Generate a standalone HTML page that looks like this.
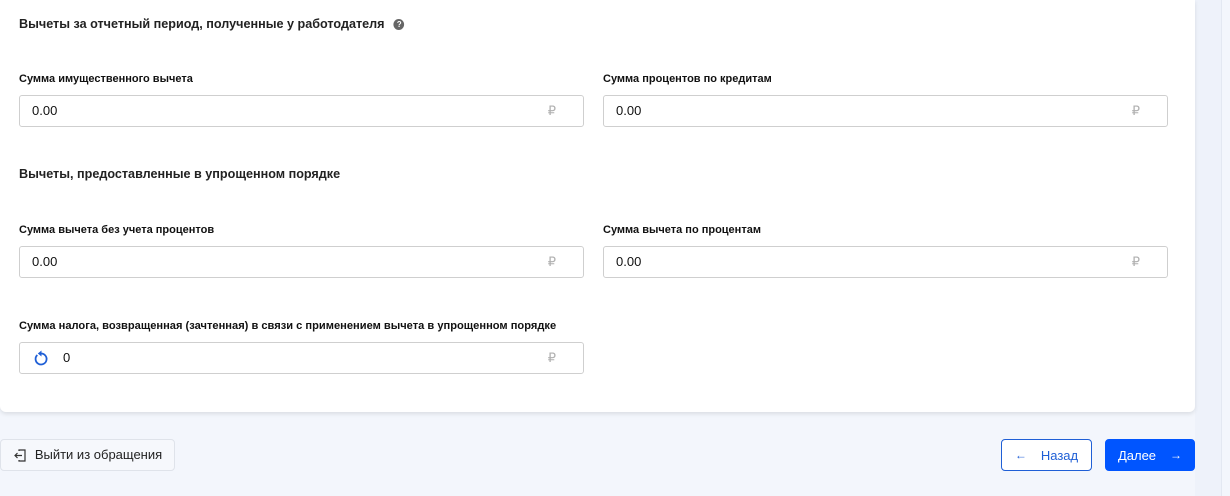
<!DOCTYPE html>
<html><head><meta charset="utf-8"><style>
*{box-sizing:border-box;margin:0;padding:0}
body{width:1230px;height:496px;background:#f3f6fc;font-family:"Liberation Sans",sans-serif;position:relative;overflow:hidden;color:#222}
.card{position:absolute;left:0;top:0;width:1195px;height:412px;background:#fff;border-radius:0 0 6px 6px;box-shadow:0 2px 4px rgba(0,0,0,.1)}
.sb{position:absolute;left:1195px;top:0;width:27px;height:496px;background:#eef2fa}
.sb2{position:absolute;left:1221px;top:0;width:1px;height:496px;background:#e3e8f2}
.t{position:absolute;font-weight:bold;white-space:nowrap;transform-origin:left center;transform:scaleX(.97)}
.h{font-size:13px;color:#222}
.l{font-size:11px;color:#111;transform:scaleX(1.0)}
.in{position:absolute;height:32px;border:1px solid #cfcfcf;border-radius:3px;background:#fff;font-size:13px;color:#111;padding:0 12px;line-height:30px}
.in .r{position:absolute;right:27px;top:0;color:#b0b0b0;font-size:13px}
.q{display:inline-block;width:11px;height:11px;border-radius:50%;background:#666;color:#fff;font-size:8px;text-align:center;line-height:11px;vertical-align:1px;margin-left:6px}
.btn{position:absolute;top:439px;height:32px;border-radius:4px;font-size:13px;line-height:30px;text-align:center}
.ar{display:inline-block;font-weight:bold;font-size:12px;vertical-align:1px}
</style></head><body>
<div class="sb"></div><div class="sb2"></div>
<div class="card">
<div class="t h" style="left:19px;top:16px">Вычеты за отчетный период, полученные у работодателя <span class="q">?</span></div>
<div class="t l" style="left:19px;top:73px">Сумма имущественного вычета</div>
<div class="t l" style="left:603px;top:73px">Сумма процентов по кредитам</div>
<div class="in" style="left:19px;top:95px;width:565px">0.00<span class="r">₽</span></div>
<div class="in" style="left:603px;top:95px;width:565px">0.00<span class="r">₽</span></div>
<div class="t h" style="left:19px;top:166px">Вычеты, предоставленные в упрощенном порядке</div>
<div class="t l" style="left:19px;top:224px">Сумма вычета без учета процентов</div>
<div class="t l" style="left:603px;top:224px">Сумма вычета по процентам</div>
<div class="in" style="left:19px;top:246px;width:565px">0.00<span class="r">₽</span></div>
<div class="in" style="left:603px;top:246px;width:565px">0.00<span class="r">₽</span></div>
<div class="t l" style="left:19px;top:320px;transform:scaleX(1.01)">Сумма налога, возвращенная (зачтенная) в связи с применением вычета в упрощенном порядке</div>
<div class="in" style="left:19px;top:342px;width:565px;padding-left:43px">
<svg style="position:absolute;left:13px;top:7px" width="16" height="17" viewBox="0 0 16 17"><path d="M4.3 5A5.5 5.5 0 1 0 8 3.5" fill="none" stroke="#1f5fd6" stroke-width="1.8"/><path d="M8.5 0.5L8.5 6.5 4.8 3.5Z" fill="#1f5fd6"/></svg>
0<span class="r">₽</span></div>
</div>
<div class="btn" style="left:0;width:175px;border:1px solid #dfe3ea;background:#f6f8fc;color:#222">
<svg style="position:absolute;left:13px;top:9px" width="13" height="13" viewBox="0 0 13 13"><path d="M5 2V1h6v11H5v-1M8 6.5H1M3.5 4L1 6.5 3.5 9" fill="none" stroke="#333" stroke-width="1.2"/></svg>
<span style="margin-left:22px">Выйти из обращения</span></div>
<div class="btn" style="left:1001px;width:91px;border:1px solid #1f5fd6;background:#fff;color:#1f5fd6"><span class="ar" style="margin-right:14px">←</span>Назад</div>
<div class="btn" style="left:1105px;width:90px;background:#0055ff;color:#fff;border:1px solid #0055ff">Далее<span class="ar" style="margin-left:14px">→</span></div>
</body></html>
